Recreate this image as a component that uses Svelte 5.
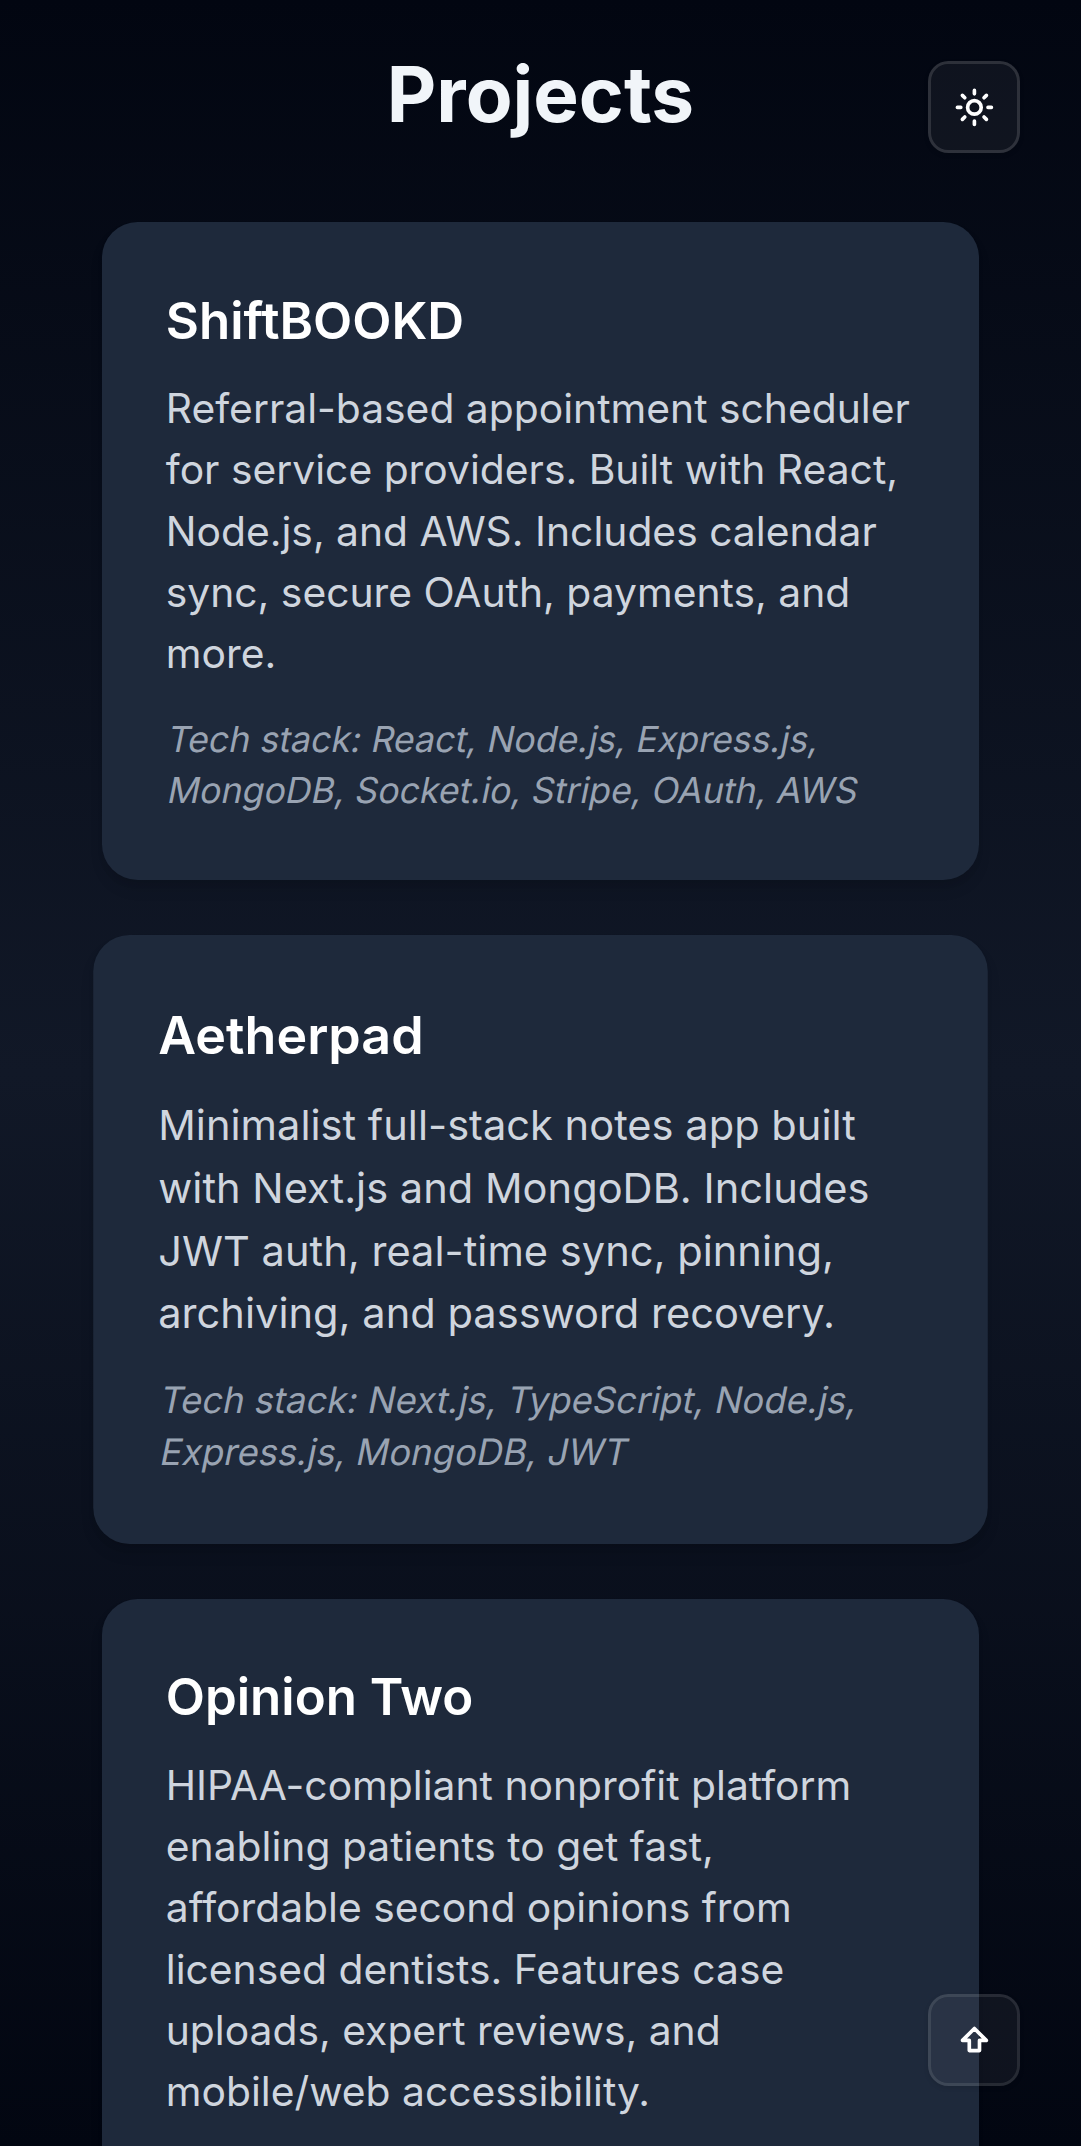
<script>
  const projects = [
    {
      title: 'ShiftBOOKD',
      body: 'Referral-based appointment scheduler for service providers. Built with React, Node.js, and AWS. Includes calendar sync, secure OAuth, payments, and more.',
      stack: ['Tech stack: React, Node.js, Express.js,', 'MongoDB, Socket.io, Stripe, OAuth, AWS']
    },
    {
      title: 'Aetherpad',
      body: 'Minimalist full-stack notes app built with Next.js and MongoDB. Includes JWT auth, real-time sync, pinning, archiving, and password recovery.',
      stack: ['Tech stack: Next.js, TypeScript, Node.js,', 'Express.js, MongoDB, JWT'],
      active: true
    },
    {
      title: 'Opinion Two',
      body: 'HIPAA-compliant nonprofit platform enabling patients to get fast, affordable second opinions from licensed dentists. Features case uploads, expert reviews, and mobile/web accessibility.'
    }
  ];
</script>

<div class="page">
  <h1>Projects</h1>
  <main>
    {#each projects as project}
      <article class:active={project.active}>
        <h2>{project.title}</h2>
        <p class="body">{project.body}</p>
        {#if project.stack}
          <p class="stack">
            {#each project.stack as line}
              <span>{line}</span>
            {/each}
          </p>
        {/if}
      </article>
    {/each}
  </main>

  <button class="theme" aria-label="Toggle theme">
    <svg viewBox="0 0 24 24">
      <circle cx="12" cy="12" r="4" />
      <path d="M12 2v2M12 20v2M4.93 4.93l1.41 1.41M17.66 17.66l1.41 1.41M2 12h2M20 12h2M6.34 17.66l-1.41 1.41M19.07 4.93l-1.41 1.41" />
    </svg>
  </button>
  <button class="top" aria-label="Back to top">
    <svg viewBox="0 0 24 24">
      <path d="M9 18v-6H5l7-7 7 7h-4v6H9z" />
    </svg>
  </button>
</div>

<style>
  :global(body) {
    background: #020617;
  }
  .page {
    --u: 2.55px;
    position: relative;
    box-sizing: border-box;
    height: 2146px;
    overflow: hidden;
    padding: 49px calc(40 * var(--u)) 0;
    background: linear-gradient(#020611, #111827 50%, #020611);
    font-family: Inter, sans-serif;
  }
  h1,
  h2,
  p {
    margin: 0;
  }
  h1 {
    margin-bottom: 81px;
    color: #f1f5f9;
    font-size: calc(30 * var(--u));
    line-height: calc(36 * var(--u));
    font-weight: 700;
    text-align: center;
  }
  main {
    display: flex;
    flex-direction: column;
    gap: calc(24 * var(--u));
  }
  article {
    padding: 62.75px calc(25 * var(--u)) 63.5px;
    border-radius: calc(14 * var(--u));
    background: #1e293b;
    box-shadow:
      0 calc(4 * var(--u)) calc(6 * var(--u)) calc(-1 * var(--u)) rgba(0, 0, 0, 0.1),
      0 calc(2 * var(--u)) calc(4 * var(--u)) calc(-2 * var(--u)) rgba(0, 0, 0, 0.1);
  }
  article.active {
    transform: scale(1.02);
  }
  h2 {
    margin-bottom: 22.2px;
    color: #fff;
    font-size: calc(20 * var(--u));
    line-height: calc(28 * var(--u));
    font-weight: 600;
  }
  .body {
    color: #cfd5de;
    font-size: calc(16 * var(--u));
    line-height: calc(24 * var(--u));
  }
  .stack {
    margin-top: 30px;
    color: #99a3b2;
    font-size: calc(14 * var(--u));
    line-height: calc(20 * var(--u));
  }
  /* Slants each line of the upright face around its own baseline. */
  .stack span {
    display: block;
    white-space: nowrap;
    transform: skewX(-11.5deg);
    transform-origin: 0 75%;
  }
  button {
    position: absolute;
    right: calc(24 * var(--u));
    display: flex;
    align-items: center;
    justify-content: center;
    box-sizing: border-box;
    width: calc(36 * var(--u));
    height: calc(36 * var(--u));
    padding: 0;
    border: 3px solid rgba(255, 255, 255, 0.17);
    border-radius: calc(8 * var(--u));
    background: rgba(255, 255, 255, 0.05);
    background-clip: padding-box;
    box-shadow: 0 2px 5px rgba(0, 0, 0, 0.1);
    color: #fff;
  }
  .theme {
    top: calc(24 * var(--u));
  }
  .top {
    bottom: 60px;
    border-color: rgba(255, 255, 255, 0.14);
  }
  svg {
    width: calc(16 * var(--u));
    height: calc(16 * var(--u));
    flex: none;
    fill: none;
    stroke: currentColor;
    stroke-width: 2.15;
    stroke-linecap: round;
    stroke-linejoin: round;
  }
</style>
